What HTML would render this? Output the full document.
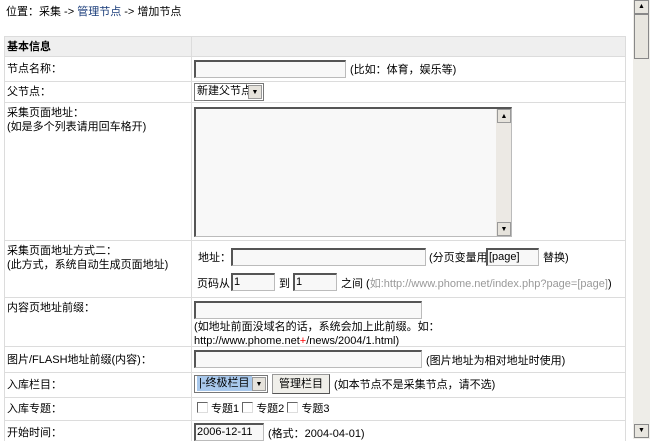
<!DOCTYPE html>
<html><head><meta charset="utf-8"><style>
*{margin:0;padding:0;box-sizing:border-box}
body{width:650px;height:439px;overflow:hidden;background:#fff;font-family:"Liberation Sans","Noto Sans CJK SC",sans-serif;font-size:11px;color:#000;position:relative}
.a{position:absolute;white-space:nowrap;line-height:14px}
.hl{position:absolute;left:4px;width:622px;height:1px;background:#dcdcdc}
.inp{position:absolute;background:#f8f8f8;border:1px solid #bbb;border-top:2px solid #555;border-left:2px solid #555;height:18px;font-size:11px;line-height:14px;padding-left:1px}
.sel{position:absolute;border:1px solid #777;height:18px;background:#fff;font-size:11px;line-height:15px;padding-left:2px;overflow:hidden;white-space:nowrap}
.arr{position:absolute;right:1px;top:1px;width:14px;height:14px;background:#e6e3dc;border:1px solid #999;font-size:7px;text-align:center;line-height:13px}
.cb{display:inline-block;width:11px;height:11px;border-top:1px solid #666;border-left:1px solid #666;border-right:1px solid #ddd;border-bottom:1px solid #ddd;vertical-align:-1px;margin-right:3px}
.g{color:#999}
</style></head><body>
<div class="a" style="left:6px;top:5px">位置：采集 -&gt; <span style="color:#1a3c7a">管理节点</span> -&gt; 增加节点</div>

<div style="position:absolute;left:4px;top:36px;width:622px;height:405px;border-left:1px solid #dcdcdc;border-right:1px solid #dcdcdc"></div>
<div style="position:absolute;left:5px;top:37px;width:620px;height:19px;background:#efefef"></div>
<div style="position:absolute;left:191px;top:36px;width:1px;height:405px;background:#dcdcdc"></div>
<div class="hl" style="top:36px"></div>
<div class="hl" style="top:56px"></div>
<div class="hl" style="top:81px"></div>
<div class="hl" style="top:102px"></div>
<div class="hl" style="top:240px"></div>
<div class="hl" style="top:297px"></div>
<div class="hl" style="top:346px"></div>
<div class="hl" style="top:372px"></div>
<div class="hl" style="top:397px"></div>
<div class="hl" style="top:420px"></div>

<div class="a" style="left:7px;top:40px;font-weight:bold">基本信息</div>
<div class="a" style="left:7px;top:62px">节点名称：</div>
<div class="inp" style="left:194px;top:60px;width:152px"></div>
<div class="a" style="left:350px;top:63px">(比如：体育，娱乐等)</div>

<div class="a" style="left:7px;top:85px">父节点：</div>
<div class="sel" style="left:194px;top:83px;width:70px">新建父节点<div class="arr">▼</div></div>

<div class="a" style="left:7px;top:106px">采集页面地址：<br>(如是多个列表请用回车格开)</div>
<div class="inp" style="left:194px;top:107px;width:318px;height:130px"><div style="position:absolute;right:0;top:0;width:15px;height:100%;background:#ece9e4"></div><div class="arr" style="right:0;top:0">▲</div><div class="arr" style="right:0;top:auto;bottom:0">▼</div></div>

<div class="a" style="left:7px;top:244px">采集页面地址方式二：<br>(此方式，系统自动生成页面地址)</div>
<div class="a" style="left:198px;top:251px">地址：</div>
<div class="inp" style="left:231px;top:248px;width:195px"></div>
<div class="a" style="left:429px;top:251px">(分页变量用</div>
<div class="inp" style="left:486px;top:248px;width:53px">[page]</div>
<div class="a" style="left:543px;top:251px">替换)</div>
<div class="a" style="left:197px;top:277px">页码从</div>
<div class="inp" style="left:231px;top:273px;width:44px">1</div>
<div class="a" style="left:279px;top:277px">到</div>
<div class="inp" style="left:293px;top:273px;width:44px">1</div>
<div class="a" style="left:341px;top:277px">之间 (<span class="g">如:http://www.phome.net/index.php?page=[page]</span>)</div>

<div class="a" style="left:7px;top:301px">内容页地址前缀：</div>
<div class="inp" style="left:194px;top:301px;width:228px"></div>
<div class="a" style="left:194px;top:320px">(如地址前面没域名的话，系统会加上此前缀。如：<br>http://www.phome.net<span style="color:red">+</span>/news/2004/1.html)</div>

<div class="a" style="left:7px;top:353px">图片/FLASH地址前缀(内容)：</div>
<div class="inp" style="left:194px;top:350px;width:228px"></div>
<div class="a" style="left:426px;top:354px">(图片地址为相对地址时使用)</div>

<div class="a" style="left:7px;top:378px">入库栏目：</div>
<div class="sel" style="left:194px;top:375px;width:74px;background:#fff"><span style="background:#a8c8ec;display:inline-block;padding:0 2px">|-终极栏目</span><div class="arr">▼</div></div>
<div style="position:absolute;left:272px;top:374px;width:58px;height:20px;background:#f0efea;border:1px solid #999;border-right-color:#555;border-bottom-color:#555;text-align:center;line-height:18px">管理栏目</div>
<div class="a" style="left:334px;top:378px">(如本节点不是采集节点，请不选)</div>

<div class="a" style="left:7px;top:402px">入库专题：</div>
<div class="a" style="left:197px;top:402px"><span class="cb"></span>专题1 <span class="cb"></span>专题2 <span class="cb"></span>专题3</div>

<div class="a" style="left:7px;top:426px">开始时间：</div>
<div class="inp" style="left:194px;top:423px;width:70px">2006-12-11</div>
<div class="a" style="left:268px;top:427px">(格式：2004-04-01)</div>

<div style="position:absolute;left:633px;top:0;width:17px;height:439px;background:#eeede8"></div>
<div style="position:absolute;left:634px;top:0;width:15px;height:14px;background:#e8e6df;border:1px solid #888;font-size:7px;text-align:center;line-height:12px">▲</div>
<div style="position:absolute;left:634px;top:14px;width:15px;height:45px;background:#e8e6df;border:1px solid #888"></div>
<div style="position:absolute;left:634px;top:424px;width:15px;height:14px;background:#e8e6df;border:1px solid #888;font-size:7px;text-align:center;line-height:12px">▼</div>
</body></html>
